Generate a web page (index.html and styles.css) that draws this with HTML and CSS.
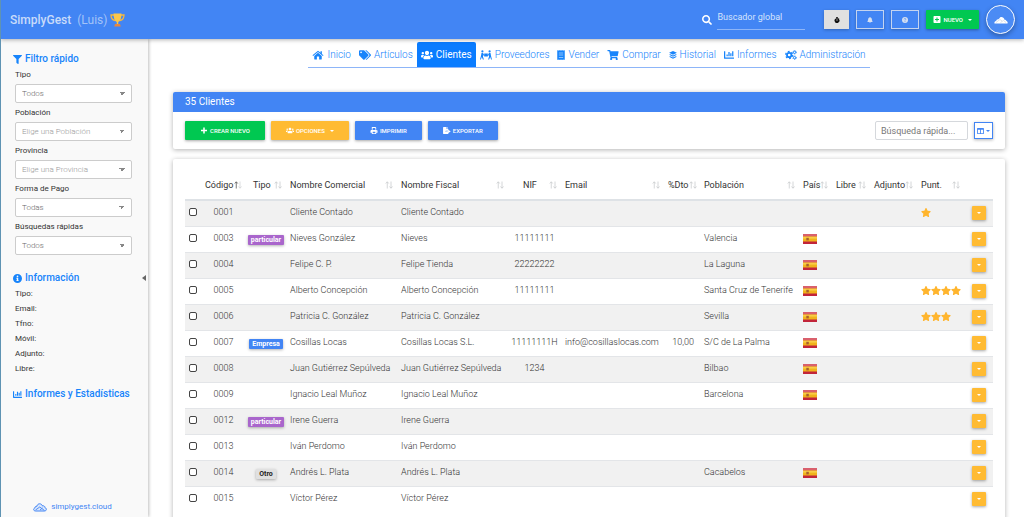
FILE: index.html
```html
<!DOCTYPE html>
<html lang="es">
<head>
<meta charset="utf-8">
<meta name="viewport" content="width=device-width, initial-scale=1">
<title>SimplyGest</title>
<link rel="stylesheet" href="styles.css">
</head>
<body>
<svg class="sprite" aria-hidden="true">
  <symbol id="i-star" viewBox="0 0 576 512"><path d="M259.3 17.8L194 150.2 47.9 171.5c-26.2 3.8-36.7 36.1-17.7 54.6l105.7 103-25 145.5c-4.5 26.3 23.2 46 46.4 33.7L288 439.6l130.7 68.7c23.2 12.2 50.9-7.4 46.4-33.7l-25-145.5 105.7-103c19-18.5 8.5-50.8-17.7-54.6L382 150.2 316.7 17.8c-11.7-23.6-45.6-23.9-57.4 0z"/></symbol>
  <symbol id="i-filter" viewBox="0 0 512 512"><path d="M487.976 0H24.028C2.71 0-8.047 25.866 7.058 40.971L192 225.941V432c0 7.831 3.821 15.17 10.237 19.662l80 55.98C298.02 518.69 320 507.493 320 487.98V225.941l184.947-184.97C520.021 25.896 509.338 0 487.976 0z"/></symbol>
  <symbol id="i-cart" viewBox="0 0 576 512"><path d="M528.12 301.319l47.273-208C578.806 78.301 567.391 64 551.99 64H159.208l-9.166-44.81C147.758 8.021 137.93 0 126.529 0H24C10.745 0 0 10.745 0 24v16c0 13.255 10.745 24 24 24h69.883l70.248 343.435C147.325 417.1 136 435.222 136 456c0 30.928 25.072 56 56 56s56-25.072 56-56c0-15.674-6.447-29.835-16.824-40h209.647C430.447 426.165 424 440.326 424 456c0 30.928 25.072 56 56 56s56-25.072 56-56c0-22.172-12.888-41.332-31.579-50.405l5.517-24.276c3.413-15.018-8.002-29.319-23.403-29.319H218.117l-6.545-32h293.145c11.206 0 20.92-7.754 23.403-18.681z"/></symbol>
  <symbol id="i-chart" viewBox="0 0 512 512"><path d="M332.8 320h38.4c6.4 0 12.8-6.4 12.8-12.8V172.8c0-6.4-6.4-12.8-12.8-12.8h-38.4c-6.4 0-12.8 6.4-12.8 12.8v134.4c0 6.4 6.4 12.8 12.8 12.8zm96 0h38.4c6.4 0 12.8-6.4 12.8-12.8V76.8c0-6.4-6.4-12.8-12.8-12.8h-38.4c-6.4 0-12.8 6.4-12.8 12.8v230.4c0 6.4 6.4 12.8 12.8 12.8zm-288 0h38.4c6.4 0 12.8-6.4 12.8-12.8v-70.4c0-6.4-6.4-12.8-12.8-12.8h-38.4c-6.4 0-12.8 6.4-12.8 12.8v70.4c0 6.4 6.4 12.8 12.8 12.8zm96 0h38.4c6.4 0 12.8-6.4 12.8-12.8V108.8c0-6.4-6.4-12.8-12.8-12.8h-38.4c-6.4 0-12.8 6.4-12.8 12.8v198.4c0 6.4 6.4 12.8 12.8 12.8zM496 384H64V80c0-8.84-7.16-16-16-16H16C7.16 64 0 71.16 0 80v336c0 17.67 14.33 32 32 32h464c8.84 0 16-7.16 16-16v-32c0-8.84-7.16-16-16-16z"/></symbol>
  <symbol id="i-users" viewBox="0 0 640 512"><path d="M96 224c35.3 0 64-28.7 64-64s-28.7-64-64-64-64 28.7-64 64 28.7 64 64 64zm448 0c35.3 0 64-28.7 64-64s-28.7-64-64-64-64 28.7-64 64 28.7 64 64 64zm32 32h-64c-17.6 0-33.5 7.1-45.1 18.6 40.3 22.1 68.9 62 75.1 109.4h66c17.7 0 32-14.3 32-32v-32c0-35.3-28.7-64-64-64zm-256 0c61.9 0 112-50.1 112-112S381.9 32 320 32 208 82.1 208 144s50.1 112 112 112zm76.8 32h-8.3c-20.8 10-43.9 16-68.5 16s-47.6-6-68.5-16h-8.3C179.6 288 128 339.6 128 403.2V432c0 26.5 21.5 48 48 48h288c26.5 0 48-21.5 48-48v-28.8c0-63.6-51.6-115.2-115.2-115.2zm-223.7-13.4C161.5 263.1 145.6 256 128 256H64c-35.3 0-64 28.7-64 64v32c0 17.7 14.3 32 32 32h65.9c6.3-47.4 34.9-87.3 75.2-109.4z"/></symbol>
  <symbol id="i-tags" viewBox="0 0 640 512"><path d="M497.941 225.941L286.059 14.059A48 48 0 0 0 252.118 0H48C21.49 0 0 21.49 0 48v204.118a48 48 0 0 0 14.059 33.941l211.882 211.882c18.744 18.745 49.136 18.746 67.882 0l204.118-204.118c18.745-18.745 18.745-49.137 0-67.882zM112 160c-26.51 0-48-21.49-48-48s21.49-48 48-48 48 21.49 48 48-21.49 48-48 48zm513.941 133.823L421.823 497.941c-18.745 18.745-49.137 18.745-67.882 0l-.36-.36L527.64 323.522c16.999-16.999 26.36-39.6 26.36-63.64s-9.362-46.641-26.36-63.64L331.397 0h48.721a48 48 0 0 1 33.941 14.059l211.882 211.882c18.745 18.745 18.745 49.137 0 67.882z"/></symbol>
  <symbol id="i-search" viewBox="0 0 512 512"><path d="M505 442.7L405.3 343c-4.5-4.5-10.6-7-17-7H372c27.6-35.3 44-79.7 44-128C416 93.1 322.9 0 208 0S0 93.1 0 208s93.1 208 208 208c48.3 0 92.7-16.4 128-44v16.3c0 6.4 2.5 12.5 7 17l99.7 99.7c9.4 9.4 24.6 9.4 33.9 0l28.3-28.3c9.4-9.4 9.4-24.6.1-34zM208 336c-70.7 0-128-57.2-128-128 0-70.7 57.2-128 128-128 70.7 0 128 57.2 128 128 0 70.7-57.2 128-128 128z"/></symbol>
  <symbol id="i-home" viewBox="0 0 18 16"><path d="M9 4.500 15 9.500V14.500a.6.6 0 0 1-.6.600H10.800V10.500H7.200V15H3.600A.6.6 0 0 1 3 14.500V9.500zM9 1 13 4.300V2H15.200V6.200L17.800 8.300 16.800 9.500 9 3.100 1.200 9.500.2 8.300z"/></symbol>
  <symbol id="i-carry" viewBox="0 0 20 16"><circle cx="4" cy="2" r="1.800"/><circle cx="16" cy="2" r="1.800"/><path d="M7 5.500h6v5H7zM2.500 4.500h2.600L7 8.500 6 9.300 5 8v3l1.500 4.500H4.800L3 11.500 1.500 15.500H0L1.500 10zM17.500 4.500h-2.600L13 8.500l1 .8L15 8v3l-1.500 4.500h1.700L17 11.500l1.500 4H20L18.500 10z"/></symbol>
  <symbol id="i-receipt" viewBox="0 0 12 16"><path fill-rule="evenodd" d="M0 0 1.500 1 3 0 4.500 1 6 0 7.500 1 9 0 10.500 1 12 0V16L10.500 15 9 16 7.500 15 6 16 4.500 15 3 16 1.500 15 0 16zM2.500 4.200v.8h7v-.8zM2.500 7.600v.8h7v-.8zM2.500 11v.8h7v-.8z"/></symbol>
  <symbol id="i-layers" viewBox="0 0 16 16"><path d="M8 0 15.800 3.700 8 7.400.2 3.700zM2.500 6.300 8 9 13.500 6.300 15.800 7.500 8 11.300.2 7.500zM2.500 10.300 8 13 13.500 10.300 15.800 11.500 8 15.500.2 11.500z"/></symbol>
  <symbol id="i-cogs" viewBox="0 0 20 16"><g fill="none" stroke="currentColor"><circle cx="7" cy="8" r="3.700" stroke-width="3"/><circle cx="7" cy="8" r="5.900" stroke-width="2" stroke-dasharray="3.100 3.080"/><circle cx="16" cy="3.500" r="1.900" stroke-width="1.600"/><circle cx="16" cy="3.500" r="3" stroke-width="1.200" stroke-dasharray="1.600 1.540"/><circle cx="16" cy="12.500" r="1.900" stroke-width="1.600"/><circle cx="16" cy="12.500" r="3" stroke-width="1.200" stroke-dasharray="1.600 1.540"/></g></symbol>
  <symbol id="i-info" viewBox="0 0 16 16"><path fill-rule="evenodd" d="M8 0a8 8 0 1 0 0 16A8 8 0 0 0 8 0zM8 2.600a1.500 1.500 0 1 1 0 3 1.500 1.500 0 0 1 0-3zM6 6.700h3.300v4.300h.8v1.600H6V11h.8V8.300H6z"/></symbol>
  <symbol id="i-question" viewBox="0 0 16 16"><circle cx="8" cy="8" r="8"/><path d="M5.600 6.200C5.800 3 10.500 3.200 10.300 6c0 1.500-2.200 1.500-2.300 3.300" fill="none" stroke="#4285f4" stroke-width="1.800"/><circle cx="8" cy="11.900" r="1.200" fill="#4285f4"/></symbol>
  <symbol id="i-bell" viewBox="0 0 14 16"><path d="M7 0a1 1 0 0 1 1 1.100C10.700 1.600 12 3.800 12 6.200c0 3 .9 4 1.600 4.800.8.900.2 2-.7 2H1.100c-.9 0-1.500-1.100-.7-2C1.100 10.200 2 9.200 2 6.200 2 3.800 3.300 1.600 6 1.100A1 1 0 0 1 7 0zM5 14h4a2 2 0 0 1-4 0z"/></symbol>
  <symbol id="i-timer" viewBox="0 0 14 16"><path fill-rule="evenodd" d="M4.500 0h5v2H8v1.100c1 .1 2 .5 2.800 1.100L12 3l1.300 1.300-1.200 1.300A6.500 6.500 0 1 1 6 3.100V2H4.500zM6.200 5.500v5h1.600v-5z"/></symbol>
  <symbol id="i-plusbox" viewBox="0 0 14 14"><path fill-rule="evenodd" d="M1.500 0h11A1.500 1.500 0 0 1 14 1.500v11a1.500 1.500 0 0 1-1.500 1.500h-11A1.500 1.500 0 0 1 0 12.500v-11A1.500 1.500 0 0 1 1.500 0zM6 3v3H3v2h3v3h2V8h3V6H8V3z"/></symbol>
  <symbol id="i-plus" viewBox="0 0 14 14"><path d="M5.500 1h3v4.500H13v3H8.500V13h-3V8.500H1v-3h4.500z"/></symbol>
  <symbol id="i-print" viewBox="0 0 16 16"><path fill-rule="evenodd" d="M3 0h8.500L13 1.500V6H11V2H5v4H3zM2 7h12a2 2 0 0 1 2 2v4h-3v3H3v-3H0V9a2 2 0 0 1 2-2zm3 4v3h6v-3zm8-2.500v1.300h1.300V8.500z"/></symbol>
  <symbol id="i-export" viewBox="0 0 18 16"><path d="M1 0h7v4.500h4V8.500H6v3h6V16H1a1 1 0 0 1-1-1V1a1 1 0 0 1 1-1zM9 0l3 3.500H9zM12 6.500l5.500 3.500L12 13.500V11H7V9h5z"/></symbol>
  <symbol id="i-columns" viewBox="0 0 16 14"><path fill-rule="evenodd" d="M1 0h14a1 1 0 0 1 1 1v12a1 1 0 0 1-1 1H1a1 1 0 0 1-1-1V1a1 1 0 0 1 1-1zm1 4v8h5V4zm7 0v8h5V4z"/></symbol>
  <symbol id="i-caret" viewBox="0 0 8 4"><path d="M0 0h8L4 4z"/></symbol>
  <symbol id="i-sort" viewBox="0 0 16 16"><path d="M4.500 15V2M1.500 5 4.500 1.500 7.500 5M12 1v13M9 11l3 3.500 3-3.500" fill="none" stroke="currentColor" stroke-width="1.500"/></symbol>
  <symbol id="i-sortup" viewBox="0 0 16 16"><path d="M12 1v13M9 11l3 3.500 3-3.500" fill="none" stroke="#cfd1d4" stroke-width="1.500"/><path d="M4.500 15V2M1.500 5 4.500 1.500 7.500 5" fill="none" stroke="#555" stroke-width="1.600"/></symbol>
  <symbol id="i-trophy" viewBox="0 0 30 28"><path d="M8 4H2c0 6 3 10 8 11M22 4h6c0 6-3 10-8 11" fill="none" stroke="#f6b73c" stroke-width="2.600"/><path d="M7 1h16c0 9-2 15-6.500 17v4h-3v-4C9 16 7 10 7 1z" fill="#fbc64b"/><path d="M10 22h10l1.500 5h-13z" fill="#e8863c"/></symbol>
  <symbol id="i-cloud" viewBox="0 0 28 18"><path d="M5 16h18c4.500 0 5-5.500 1-6.500C24 6 21 5 19 6 17 0 9 0 8 6.500 5 6 4 8 4.200 9.800 0 10.500.5 16 5 16z" fill="#dbe8fd" stroke="currentColor" stroke-width="2"/><path d="M5 14l8.500-6L23 15M14 14l5-4" fill="none" stroke="currentColor" stroke-width="1.800"/></symbol>
  <symbol id="i-cloudw" viewBox="0 0 28 16"><path d="M1 15h26c1-2 0-4-2-5-1-2-3-3-4-2.500C20 2 13 0 11 4.500L9 6.500C6 6 5 8 4.500 9.500 2 10 0 13 1 15z" fill="#fff"/><path d="M4 13l8-6 4 3M13 13l6-4 5 4" fill="none" stroke="#c6cfdd" stroke-width="1.300"/></symbol>
  <symbol id="i-flag" viewBox="0 0 14 10"><path fill="#c2253a" d="M0 0h14v10H0z"/><path fill="#d9606c" d="M0 0h14v2.600H0z"/><path fill="#f0b31c" d="M0 2.600h14v4.900H0z"/><path fill="#f8cd45" d="M0 2.600h14v2H0z"/><path fill="#a9602e" d="M3.300 3.800h2.500v2.600H3.300z"/></symbol>
</svg>

<header class="topbar">
  <a class="brand" href="#">SimplyGest<span class="brand-user">(Luis)</span></a>
  <svg class="trophy"><use href="#i-trophy"/></svg>
  <div class="top-tools">
    <label class="global-search"><svg><use href="#i-search"/></svg><input type="text" placeholder="Buscador global" aria-label="Buscador global"></label>
    <button class="tool tool-light" type="button" aria-label="Cronómetro"><svg><use href="#i-timer"/></svg></button>
    <button class="tool" type="button" aria-label="Avisos"><svg><use href="#i-bell"/></svg></button>
    <button class="tool" type="button" aria-label="Ayuda"><svg><use href="#i-question"/></svg></button>
    <button class="btn btn-green btn-new" type="button"><svg class="ico"><use href="#i-plusbox"/></svg>NUEVO<svg class="caret"><use href="#i-caret"/></svg></button>
    <button class="avatar" type="button" aria-label="Cuenta"><svg><use href="#i-cloudw"/></svg></button>
  </div>
</header>

<div class="layout">
  <aside class="sidebar">
    <h2 class="side-title"><svg><use href="#i-filter"/></svg>Filtro rápido</h2>
    <form class="filters">
      <label for="f-tipo">Tipo</label>
      <select id="f-tipo" class="dark"><option>Todos</option></select>
      <label for="f-pob">Población</label>
      <select id="f-pob"><option>Elige una Población</option></select>
      <label for="f-prov">Provincia</label>
      <select id="f-prov"><option>Elige una Provincia</option></select>
      <label for="f-pago">Forma de Pago</label>
      <select id="f-pago" class="dark"><option>Todas</option></select>
      <label for="f-rap">Búsquedas rápidas</label>
      <select id="f-rap" class="dark"><option>Todos</option></select>
    </form>
    <div class="side-row">
      <h2 class="side-title"><svg><use href="#i-info"/></svg>Información</h2>
      <button class="collapse" type="button" aria-label="Contraer panel"></button>
    </div>
    <ul class="info">
      <li>Tipo:</li><li>Email:</li><li>Tfno:</li><li>Móvil:</li><li>Adjunto:</li><li>Libre:</li>
    </ul>
    <h2 class="side-title"><svg><use href="#i-chart"/></svg>Informes y Estadísticas</h2>
    <a class="cloud-link" href="#"><svg><use href="#i-cloud"/></svg>simplygest.cloud</a>
  </aside>

  <main class="main">
    <nav class="tabs">
      <a href="#"><svg><use href="#i-home"/></svg>Inicio</a>
      <a href="#"><svg><use href="#i-tags"/></svg>Artículos</a>
      <a href="#" class="active"><svg><use href="#i-users"/></svg>Clientes</a>
      <a href="#"><svg><use href="#i-carry"/></svg>Proveedores</a>
      <a href="#"><svg class="narrow"><use href="#i-receipt"/></svg>Vender</a>
      <a href="#"><svg><use href="#i-cart"/></svg>Comprar</a>
      <a href="#"><svg class="narrow"><use href="#i-layers"/></svg>Historial</a>
      <a href="#"><svg class="medium"><use href="#i-chart"/></svg>Informes</a>
      <a href="#"><svg><use href="#i-cogs"/></svg>Administración</a>
    </nav>

    <section class="card">
      <h1 class="card-title">35 Clientes</h1>
      <div class="actions">
        <button class="btn btn-green" type="button"><svg class="ico"><use href="#i-plus"/></svg>CREAR NUEVO</button>
        <button class="btn btn-amber" type="button"><svg class="ico"><use href="#i-users"/></svg>OPCIONES<svg class="caret"><use href="#i-caret"/></svg></button>
        <button class="btn btn-blue" type="button"><svg class="ico"><use href="#i-print"/></svg>IMPRIMIR</button>
        <button class="btn btn-blue" type="button"><svg class="ico"><use href="#i-export"/></svg>EXPORTAR</button>
        <input class="quick" type="text" placeholder="Búsqueda rápida..." aria-label="Búsqueda rápida">
        <button class="columns" type="button" aria-label="Columnas"><svg class="ico"><use href="#i-columns"/></svg><svg class="caret"><use href="#i-caret"/></svg></button>
      </div>
    </section>

    <section class="card list">
      <table>
        <colgroup><col class="w-check"><col class="w-code"><col class="w-type"><col class="w-name"><col class="w-name"><col class="w-nif"><col class="w-email"><col class="w-dto"><col class="w-city"><col class="w-country"><col class="w-free"><col class="w-adj"><col class="w-punt"><col class="w-menu"></colgroup>
        <thead><tr>
          <th></th>
          <th><div>Código<svg><use href="#i-sortup"/></svg></div></th>
          <th><div class="mid">Tipo<svg><use href="#i-sort"/></svg></div></th>
          <th><div>Nombre Comercial<svg><use href="#i-sort"/></svg></div></th>
          <th><div>Nombre Fiscal<svg><use href="#i-sort"/></svg></div></th>
          <th><div class="nif">NIF<svg><use href="#i-sort"/></svg></div></th>
          <th><div>Email<svg><use href="#i-sort"/></svg></div></th>
          <th><div>%Dto<svg><use href="#i-sort"/></svg></div></th>
          <th><div>Población<svg><use href="#i-sort"/></svg></div></th>
          <th><div>País<svg><use href="#i-sort"/></svg></div></th>
          <th><div>Libre<svg><use href="#i-sort"/></svg></div></th>
          <th><div>Adjunto<svg><use href="#i-sort"/></svg></div></th>
          <th><div>Punt.<svg><use href="#i-sort"/></svg></div></th>
          <th></th>
        </tr></thead>
        <tbody>
          <tr><td><input type="checkbox" aria-label="0001"></td><td class="c">0001</td><td class="g"></td><td>Cliente Contado</td><td>Cliente Contado</td><td class="c"></td><td></td><td class="r"></td><td></td><td class="g"></td><td></td><td></td><td class="stars"><svg><use href="#i-star"/></svg></td><td class="g"><button class="menu" type="button" aria-label="Opciones 0001"><svg><use href="#i-caret"/></svg></button></td></tr>
          <tr><td><input type="checkbox" aria-label="0003"></td><td class="c">0003</td><td class="c g"><span class="badge purple">particular</span></td><td>Nieves González</td><td>Nieves</td><td class="c">11111111</td><td></td><td class="r"></td><td>Valencia</td><td class="g"><svg class="flag"><use href="#i-flag"/></svg></td><td></td><td></td><td></td><td class="g"><button class="menu" type="button" aria-label="Opciones 0003"><svg><use href="#i-caret"/></svg></button></td></tr>
          <tr><td><input type="checkbox" aria-label="0004"></td><td class="c">0004</td><td class="g"></td><td>Felipe C. P.</td><td>Felipe Tienda</td><td class="c">22222222</td><td></td><td class="r"></td><td>La Laguna</td><td class="g"><svg class="flag"><use href="#i-flag"/></svg></td><td></td><td></td><td></td><td class="g"><button class="menu" type="button" aria-label="Opciones 0004"><svg><use href="#i-caret"/></svg></button></td></tr>
          <tr><td><input type="checkbox" aria-label="0005"></td><td class="c">0005</td><td class="g"></td><td>Alberto Concepción</td><td>Alberto Concepción</td><td class="c">11111111</td><td></td><td class="r"></td><td>Santa Cruz de Tenerife</td><td class="g"><svg class="flag"><use href="#i-flag"/></svg></td><td></td><td></td><td class="stars"><svg><use href="#i-star"/></svg><svg><use href="#i-star"/></svg><svg><use href="#i-star"/></svg><svg><use href="#i-star"/></svg></td><td class="g"><button class="menu" type="button" aria-label="Opciones 0005"><svg><use href="#i-caret"/></svg></button></td></tr>
          <tr><td><input type="checkbox" aria-label="0006"></td><td class="c">0006</td><td class="g"></td><td>Patricia C. González</td><td>Patricia C. González</td><td class="c"></td><td></td><td class="r"></td><td>Sevilla</td><td class="g"><svg class="flag"><use href="#i-flag"/></svg></td><td></td><td></td><td class="stars"><svg><use href="#i-star"/></svg><svg><use href="#i-star"/></svg><svg><use href="#i-star"/></svg></td><td class="g"><button class="menu" type="button" aria-label="Opciones 0006"><svg><use href="#i-caret"/></svg></button></td></tr>
          <tr><td><input type="checkbox" aria-label="0007"></td><td class="c">0007</td><td class="c g"><span class="badge blue">Empresa</span></td><td>Cosillas Locas</td><td>Cosillas Locas S.L.</td><td class="c">11111111H</td><td>info@cosillaslocas.com</td><td class="r">10,00</td><td>S/C de La Palma</td><td class="g"><svg class="flag"><use href="#i-flag"/></svg></td><td></td><td></td><td></td><td class="g"><button class="menu" type="button" aria-label="Opciones 0007"><svg><use href="#i-caret"/></svg></button></td></tr>
          <tr><td><input type="checkbox" aria-label="0008"></td><td class="c">0008</td><td class="g"></td><td>Juan Gutiérrez Sepúlveda</td><td>Juan Gutiérrez Sepúlveda</td><td class="c">1234</td><td></td><td class="r"></td><td>Bilbao</td><td class="g"><svg class="flag"><use href="#i-flag"/></svg></td><td></td><td></td><td></td><td class="g"><button class="menu" type="button" aria-label="Opciones 0008"><svg><use href="#i-caret"/></svg></button></td></tr>
          <tr><td><input type="checkbox" aria-label="0009"></td><td class="c">0009</td><td class="g"></td><td>Ignacio Leal Muñoz</td><td>Ignacio Leal Muñoz</td><td class="c"></td><td></td><td class="r"></td><td>Barcelona</td><td class="g"><svg class="flag"><use href="#i-flag"/></svg></td><td></td><td></td><td></td><td class="g"><button class="menu" type="button" aria-label="Opciones 0009"><svg><use href="#i-caret"/></svg></button></td></tr>
          <tr><td><input type="checkbox" aria-label="0012"></td><td class="c">0012</td><td class="c g"><span class="badge purple">particular</span></td><td>Irene Guerra</td><td>Irene Guerra</td><td class="c"></td><td></td><td class="r"></td><td></td><td class="g"></td><td></td><td></td><td></td><td class="g"><button class="menu" type="button" aria-label="Opciones 0012"><svg><use href="#i-caret"/></svg></button></td></tr>
          <tr><td><input type="checkbox" aria-label="0013"></td><td class="c">0013</td><td class="g"></td><td>Iván Perdomo</td><td>Iván Perdomo</td><td class="c"></td><td></td><td class="r"></td><td></td><td class="g"></td><td></td><td></td><td></td><td class="g"><button class="menu" type="button" aria-label="Opciones 0013"><svg><use href="#i-caret"/></svg></button></td></tr>
          <tr><td><input type="checkbox" aria-label="0014"></td><td class="c">0014</td><td class="c g"><span class="badge grey">Otro</span></td><td>Andrés L. Plata</td><td>Andrés L. Plata</td><td class="c"></td><td></td><td class="r"></td><td>Cacabelos</td><td class="g"><svg class="flag"><use href="#i-flag"/></svg></td><td></td><td></td><td></td><td class="g"><button class="menu" type="button" aria-label="Opciones 0014"><svg><use href="#i-caret"/></svg></button></td></tr>
          <tr><td><input type="checkbox" aria-label="0015"></td><td class="c">0015</td><td class="g"></td><td>Víctor Pérez</td><td>Víctor Pérez</td><td class="c"></td><td></td><td class="r"></td><td></td><td class="g"></td><td></td><td></td><td></td><td class="g"><button class="menu" type="button" aria-label="Opciones 0015"><svg><use href="#i-caret"/></svg></button></td></tr>
        </tbody>
      </table>
    </section>
  </main>
</div>
</body>
</html>
```
FILE: styles.css
```css
* { box-sizing: border-box; }

body {
  margin: 0;
  height: 100vh;
  overflow: hidden;
  display: flex;
  flex-direction: column;
  border-left: 1px solid #5f93b3;
  background: #fff;
  color: #333;
  font: 300 9px/12px Roboto, "Liberation Sans", sans-serif;
}

svg { display: block; flex: none; fill: currentColor; }
.sprite { position: absolute; width: 0; height: 0; }
a { text-decoration: none; color: inherit; }
button, input, select { font: inherit; color: inherit; margin: 0; }
button { cursor: pointer; border: 0; padding: 0; }

/* Top bar */
.topbar {
  flex: none;
  display: flex;
  align-items: center;
  height: 39px;
  padding: 0 9px;
  background: #4285f4;
  box-shadow: 0 1px 4px rgba(0, 0, 0, .3);
  color: #fff;
  z-index: 1;
}
.brand { display: flex; gap: 6px; font-size: 12px; font-weight: 500; color: #c9dbfa; }
.brand-user { font-weight: 400; color: #a3c3f8; }
.trophy { width: 15px; height: 14px; margin-left: 3px; }
.top-tools { margin-left: auto; display: flex; align-items: center; gap: 7px; }
.global-search { display: flex; align-items: center; gap: 5px; margin-right: 12px; }
.global-search svg { width: 10px; height: 10px; }
.global-search input {
  width: 88px;
  height: 20px;
  padding: 0 0 4px;
  border: 0;
  border-bottom: 1px solid #8db5f8;
  background: none;
  font-weight: 400;
}
.global-search input::placeholder { color: #d5e4fd; opacity: 1; }
.tool {
  display: grid;
  place-items: center;
  width: 28px;
  height: 19px;
  border: 1px solid #c4d4f0;
  background: none;
  color: #d5dff0;
  box-shadow: 0 1px 3px rgba(0, 0, 0, .25);
}
.tool svg { width: 6px; height: 6px; }
.tool-light { width: 25px; background: #e0e0e0; border-color: #e0e0e0; color: #111; }
.avatar {
  display: grid;
  place-items: center;
  width: 29px;
  height: 29px;
  border: 1px solid #fff;
  border-radius: 50%;
  background: #4b8bf4;
  box-shadow: 0 2px 5px rgba(0, 0, 0, .3);
}
.avatar svg { width: 14px; height: 8px; }

.btn {
  display: flex;
  align-items: center;
  justify-content: center;
  gap: 2px;
  height: 19px;
  padding: 0 15px;
  border-radius: 1px;
  box-shadow: 0 1px 3px rgba(0, 0, 0, .35);
  color: #fff;
  font-size: 6px;
  font-weight: 500;
}
.btn .ico { width: 8px; height: 7px; }
.caret { width: 4px; height: 2px; margin-left: 3px; }
.btn-green { background: #00c851; }
.btn-amber { background: #ffbb33; }
.btn-blue { background: #4285f4; }
.btn-new { padding: 0 7px; }

/* Side bar */
.layout { flex: 1; display: flex; min-height: 0; }
.sidebar {
  flex: none;
  display: flex;
  flex-direction: column;
  width: 147px;
  padding: 13px 16px 4px 12px;
  background: #f9f9f9;
  box-shadow: 1px 0 3px rgba(0, 0, 0, .25);
  font-weight: 400;
}
.side-title {
  display: flex;
  align-items: center;
  gap: 3px;
  margin: 0;
  color: #1784fb;
  font-size: 10px;
  font-weight: 500;
  line-height: 14px;
  white-space: nowrap;
}
.side-title svg { width: 9px; height: 9px; }
.filters { display: flex; flex-direction: column; padding-left: 2px; font-size: 8px; }
.filters label { line-height: 12px; margin: 3px 0; }
.filters select {
  appearance: none;
  height: 19px;
  margin-bottom: 1px;
  padding: 0 6px;
  border: 1px solid #ccc;
  border-radius: 2px;
  background:
    linear-gradient(45deg, transparent 50%, #888 50%) right 9px center / 3px 3px no-repeat,
    linear-gradient(135deg, #888 50%, transparent 50%) right 6px center / 3px 3px no-repeat,
    #fff;
  color: #999;
  font-weight: 300;
}
.filters select.dark { color: #666; }
.side-row { display: flex; justify-content: space-between; align-items: center; margin: 15px -14px 1px 0; }
.collapse {
  width: 0;
  height: 0;
  border: solid transparent;
  border-width: 3px 4px 3px 0;
  border-right-color: #666;
  background: none;
}
.info { list-style: none; margin: 0 0 11px; padding: 0 0 0 2px; font-size: 8px; line-height: 15px; }
.cloud-link {
  display: flex;
  align-items: center;
  justify-content: center;
  gap: 4px;
  margin-top: auto;
  color: #4285f4;
  font-size: 8px;
}
.cloud-link svg { width: 14px; height: 9px; }

/* Main */
.main { flex: 1; min-width: 0; padding: 3px 19px 0 25px; }
.tabs {
  display: flex;
  width: max-content;
  margin: 0 auto 24px;
  border-bottom: 1px solid #8db5f8;
  color: #1784fb;
  font-size: 10px;
}
.tabs a {
  display: flex;
  align-items: center;
  gap: 3px;
  height: 25px;
  padding: 0 4px;
  border-radius: 2px 2px 0 0;
}
.tabs svg { width: 12px; height: 10px; }
.tabs svg.medium { width: 10px; }
.tabs svg.narrow { width: 8px; }
.tabs .active { background: #0a7cff; color: #fff; font-weight: 400; }

.card {
  border-radius: 2px;
  background: #fff;
  box-shadow: 0 1px 5px rgba(0, 0, 0, .3);
}
.card-title {
  margin: 0;
  padding: 0 12px;
  border-radius: 2px 2px 0 0;
  background: #4285f4;
  color: #fff;
  font-size: 10px;
  font-weight: 400;
  line-height: 20px;
}
.actions { display: flex; align-items: center; gap: 6px; padding: 9px 12px; }
.quick {
  width: 93px;
  height: 19px;
  margin-left: auto;
  padding: 0 5px;
  border: 1px solid #d5d8dc;
  border-radius: 2px;
  font-weight: 400;
}
.quick::placeholder { color: #777; opacity: 1; }
.columns {
  display: flex;
  align-items: center;
  justify-content: center;
  gap: 2px;
  width: 19px;
  height: 17px;
  border: 1px solid #4285f4;
  background: #fff;
  color: #4285f4;
  box-shadow: 0 1px 3px rgba(0, 0, 0, .3);
}
.columns .ico { width: 7px; height: 6px; }
.columns .caret { margin: 0; }

.list { margin-top: 10px; padding: 12px 12px 20px; }
table { width: 100%; table-layout: fixed; border-collapse: collapse; }
.w-check { width: 16px; }
.w-code { width: 45px; }
.w-type { width: 40px; }
.w-name { width: 111px; }
.w-nif { width: 53px; }
.w-email { width: 103px; }
.w-dto { width: 36px; }
.w-city { width: 99px; }
.w-country { width: 33px; }
.w-free { width: 38px; }
.w-adj { width: 47px; }
.w-punt { width: 47px; }
.w-menu { width: 29px; }
th, td { padding: 0 0 0 4px; text-align: left; white-space: nowrap; }
th { height: 29px; border-bottom: 2px solid #dee2e6; font-weight: 400; }
th div { display: flex; align-items: center; justify-content: space-between; padding-right: 4px; }
th div.mid { padding-left: 3px; }
th div.nif { padding-left: 11px; }
th svg { width: 8px; height: 8px; color: #c6c8cb; }
td { height: 26px; padding-bottom: 3px; border-top: 1px solid #e3e5e8; }
tbody tr:nth-child(odd) { background: #f1f1f1; }
.c { text-align: center; padding-left: 0; }
.r { text-align: right; padding-right: 6px; }
.g { padding-bottom: 0; }
td input {
  display: block;
  appearance: none;
  width: 8px;
  height: 8px;
  border: 1px solid #444;
  border-radius: 2px;
  background: #fff;
}
.badge {
  display: inline-block;
  padding: 0 3px;
  border-radius: 1px;
  box-shadow: 0 1px 3px rgba(0, 0, 0, .3);
  color: #fff;
  font-size: 7px;
  font-weight: 700;
  line-height: 10px;
  vertical-align: middle;
}
.purple { background: #a966cc; }
.blue { background: #4285f4; }
.grey { background: #e0e0e0; color: #222; }
.flag { width: 14px; height: 10px; }
.stars { color: #ffb52e; }
.stars svg { display: inline-block; width: 10px; height: 9px; vertical-align: middle; }
.menu {
  display: grid;
  place-items: center;
  width: 14px;
  height: 14px;
  margin-left: 4px;
  border-radius: 1px;
  background: #ffbb33;
  color: #fff;
  box-shadow: 0 1px 3px rgba(0, 0, 0, .35);
}
.menu svg { width: 4px; height: 2px; }
```
